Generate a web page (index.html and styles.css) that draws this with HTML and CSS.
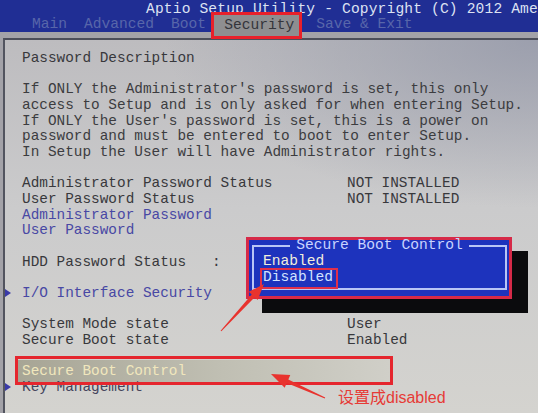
FILE: index.html
```html
<!DOCTYPE html>
<html lang="en">
<head>
    <meta charset="UTF-8">
    <meta name="viewport" content="width=device-width, initial-scale=1.0">
    <title>Aptio Setup Utility - Security</title>
    <link rel="stylesheet" href="styles.css">
</head>
<body>

<div class="screen">
    <header class="topbar">
        <div class="title">Aptio Setup Utility - Copyright (C) 2012 Ame</div>
        <nav class="menu">
            <span>Main</span>
            <span>Advanced</span>
            <span>Boot</span>
            <span class="active">Security</span>
            <span>Save &amp; Exit</span>
        </nav>
    </header>

    <main class="panel">
        <div class="line">Password Description</div>
        <div class="gap"></div>
        <p class="help">If ONLY the Administrator's password is set, this only
access to Setup and is only asked for when entering Setup.
If ONLY the User's password is set, this is a power on
password and must be entered to boot to enter Setup.
In Setup the User will have Administrator rights.</p>
        <div class="gap"></div>
        <div class="row"><span>Administrator Password Status</span><span>NOT INSTALLED</span></div>
        <div class="row"><span>User Password Status</span><span>NOT INSTALLED</span></div>
        <div class="line link">Administrator Password</div>
        <div class="line link">User Password</div>
        <div class="gap"></div>
        <div class="line">HDD Password Status   :</div>
        <div class="gap"></div>
        <div class="line link sub">I/O Interface Security</div>
        <div class="gap"></div>
        <div class="row"><span>System Mode state</span><span>User</span></div>
        <div class="row"><span>Secure Boot state</span><span>Enabled</span></div>
        <div class="gap"></div>
        <div class="line selected">Secure Boot Control</div>
        <div class="line sub dim">Key Management</div>
    </main>

    <!-- option popup -->
    <div class="popup">
        <fieldset class="popup-frame">
            <legend>Secure Boot Control</legend>
            <div class="option">Enabled</div>
            <div class="option current">Disabled</div>
        </fieldset>
    </div>

    <!-- annotations drawn over the photo -->
    <div class="mark-row"></div>
    <svg class="arrows" width="538" height="413" viewBox="0 0 538 413">
        <polygon points="220.6,330.7 251.7,294.4 248.8,291.8 264,284 257.6,299.9 254.7,297.2 221.4,331.3"/>
        <polygon points="325.2,397.5 288.3,379.5 290.3,374.9 271,374 284.7,387.7 286.7,383.1 324.8,398.5"/>
    </svg>
    <div class="note">设置成disabled</div>
</div>

</body>
</html>
```

FILE: styles.css
```css
* {
    box-sizing: border-box;
}

body {
    margin: 0;
    width: 538px;
    height: 413px;
    overflow: hidden;
    font-family: "Liberation Mono", "DejaVu Sans Mono", monospace;
    background: #a3a2a8;
}

.screen {
    position: relative;
    width: 538px;
    height: 413px;
    overflow: hidden;
    display: flex;
    flex-direction: column;
    background: #a3a2a8;
}

/* blue title bar */
.topbar {
    height: 32px;
    padding-top: 2px;
    background: #202e94;
    color: #dde2f2;
    font-size: 14.6px;
    line-height: 15px;
}

.title {
    padding-left: 146px;
    letter-spacing: 0.15px;
    white-space: nowrap;
}

.menu {
    display: flex;
    align-items: center;
    gap: 17px;
    height: 15px;
    padding-left: 32px;
    color: #5866aa;
    white-space: pre;
}

.menu .active {
    position: relative;
    top: 1px;
    height: 27px;
    line-height: 20px;
    padding: 0 5px 0 10px;
    margin: 0 -3px 0 -12px;
    background: #8e8e90;
    color: #34353b;
    border: 3px solid #e8202a;
}

/* main gray panel */
.panel {
    flex: 1;
    margin: 6px 0 0 3px;
    padding: 11px 0 0 17px;
    border-top: 2px solid #4c4e5a;
    border-left: 2px solid #52545f;
    font-size: 14.4px;
    line-height: 15.67px;
    color: #38383c;
    background:
        radial-gradient(ellipse 70% 45% at 100% 0%, rgba(150, 154, 170, 0.85), rgba(150, 154, 170, 0)),
        linear-gradient(to bottom, #bdbcbf, #cbcbcc 45%, #d4d3cf);
}

.line, .row, .gap {
    height: 15.67px;
    white-space: pre;
}

.help {
    margin: 0;
    white-space: pre;
    color: #3c3c40;
}

.row {
    display: grid;
    grid-template-columns: 325px auto;
}

.link {
    color: #4848a4;
}

.sub {
    margin-left: -17px;
}

.sub::before {
    content: "";
    display: inline-block;
    width: 0;
    height: 0;
    margin-right: 11px;
    border-left: 6px solid #3a3aa8;
    border-top: 4px solid transparent;
    border-bottom: 4px solid transparent;
}

.dim {
    color: #44445c;
}

.selected {
    width: 372px;
    height: 23.67px;
    margin: -4px 0 -4px -4px;
    padding: 4px 0 4px 4px;
    color: #f1e7bd;
    background: linear-gradient(90deg, #a7a595, #c0bfb3 55%, #d0cfc8);
}

/* popup dialog */
.popup {
    position: absolute;
    left: 246px;
    top: 237px;
    width: 266px;
    height: 62px;
    background: #1d33bd;
    border: 3px solid #d62a48;
    box-shadow: 16px 14px 0 #0b0b0d;
    font-size: 14.6px;
    line-height: 15px;
}

.popup-frame {
    height: 50px;
    margin: 0 2px 0 3px;
    padding: 3px 0 0 0;
    border: 2px solid #b9c5f5;
    min-width: 0;
}

.popup-frame legend {
    margin: 0 auto;
    padding: 0 6px;
    line-height: 11px;
    color: #c9d4ff;
}

.option {
    padding-left: 9px;
    color: #f2eedb;
    white-space: pre;
}

.option.current {
    width: fit-content;
    margin: -1px 0 0 6px;
    padding: 0 3px 2px 1px;
    border: 2px solid #e0304a;
    color: #d2e2ff;
}

/* red annotations */
.mark-row {
    position: absolute;
    left: 15px;
    top: 356px;
    width: 378px;
    height: 29px;
    border: 3px solid #e5262e;
}

.arrows {
    position: absolute;
    left: 0;
    top: 0;
    fill: #e8332e;
    pointer-events: none;
}

.note {
    position: absolute;
    left: 338px;
    top: 388px;
    font-family: "Liberation Sans", "Noto Sans CJK SC", sans-serif;
    font-size: 16px;
    line-height: 20px;
    color: #e63b36;
    white-space: nowrap;
}
```
